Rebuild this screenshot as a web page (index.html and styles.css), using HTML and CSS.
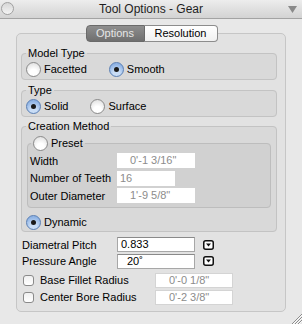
FILE: index.html
```html
<!DOCTYPE html>
<html lang="en">
<head>
  <meta charset="UTF-8" />
  <title>Tool Options - Gear</title>
  <link rel="stylesheet" href="styles.css">
</head>
<body>
  <div class="window">
    <header class="titlebar">
      <span class="close-btn"></span>
      <span class="title">Tool Options - Gear</span>
      <svg class="collapse" width="9" height="7" viewBox="0 0 9 7"><path d="M0 0 H9 L4.5 7 Z" fill="#8a8a8a"/></svg>
    </header>

    <main class="content">
      <nav class="tabs">
        <span class="tab active">Options</span>
        <span class="tab">Resolution</span>
      </nav>

      <section class="tabpanel">
        <fieldset class="group">
          <legend>Model Type</legend>
          <div class="choice-row">
            <label class="radio"><span class="radio-btn"></span>Facetted</label>
            <label class="radio"><span class="radio-btn on"></span>Smooth</label>
          </div>
        </fieldset>

        <fieldset class="group">
          <legend>Type</legend>
          <div class="choice-row">
            <label class="radio"><span class="radio-btn on"></span>Solid</label>
            <label class="radio"><span class="radio-btn"></span>Surface</label>
          </div>
        </fieldset>

        <fieldset class="group method">
          <legend>Creation Method</legend>
          <fieldset class="preset">
            <legend><label class="radio"><span class="radio-btn"></span>Preset</label></legend>
            <div class="field-row">
              <span class="field-label">Width</span>
              <span class="field disabled measure wide">0'-1 3/16&quot;</span>
            </div>
            <div class="field-row">
              <span class="field-label">Number of Teeth</span>
              <span class="field disabled short">16</span>
            </div>
            <div class="field-row">
              <span class="field-label">Outer Diameter</span>
              <span class="field disabled measure wide">1'-9 5/8&quot;</span>
            </div>
          </fieldset>
          <label class="radio dynamic"><span class="radio-btn on"></span>Dynamic</label>
        </fieldset>

        <div class="param-row first">
          <span class="param-label">Diametral Pitch</span>
          <span class="field edit">0.833</span>
          <svg class="menu-btn" width="11" height="10" viewBox="0 0 11 10"><rect x="0.75" y="0.75" width="9.5" height="8.5" rx="2" fill="#fff" stroke="#111" stroke-width="1.5"/><path d="M3 3.5 H8 L5.5 6.5 Z" fill="#111"/></svg>
        </div>
        <div class="param-row">
          <span class="param-label">Pressure Angle</span>
          <span class="field edit angle">20&#730;</span>
          <svg class="menu-btn" width="11" height="10" viewBox="0 0 11 10"><rect x="0.75" y="0.75" width="9.5" height="8.5" rx="2" fill="#fff" stroke="#111" stroke-width="1.5"/><path d="M3 3.5 H8 L5.5 6.5 Z" fill="#111"/></svg>
        </div>
        <div class="check-row">
          <label class="check"><span class="check-box"></span>Base Fillet Radius</label>
          <span class="field disabled measure framed">0'-0 1/8&quot;</span>
        </div>
        <div class="check-row">
          <label class="check"><span class="check-box"></span>Center Bore Radius</label>
          <span class="field disabled measure framed">0'-2 3/8&quot;</span>
        </div>
      </section>
    </main>

    <svg class="grip" width="12" height="12" viewBox="0 0 12 12">
      <path d="M12 2 L2 12 M12 5 L5 12 M12 8 L8 12" stroke="#8c8c8c" stroke-width="1"/>
      <path d="M12 3 L3 12 M12 6 L6 12 M12 9 L9 12" stroke="#fafafa" stroke-width="1"/>
    </svg>
  </div>
</body>
</html>
```

FILE: styles.css
```css
html, body {
  margin: 0;
  padding: 0;
}
body {
  font-family: 'Liberation Sans', Arial, sans-serif;
  font-size: 11px;
  color: #000;
  background: #e8e8e8;
}
.window {
  position: relative;
  width: 302px;
  height: 324px;
  background: #e8e8e8;
  overflow: hidden;
}
.titlebar {
  display: flex;
  align-items: center;
  justify-content: center;
  position: relative;
  height: 18px;
  background: linear-gradient(#ededed, #d3d3d3);
  border-bottom: 1px solid #a3a3a3;
}
.title {
  font-size: 12px;
  color: #1e1e1e;
}
.close-btn {
  position: absolute;
  left: 1px;
  top: 2px;
  width: 11px;
  height: 11px;
  border-radius: 50%;
  border: 1px solid #a0a0a0;
  background: linear-gradient(#d6d6d6, #f4f4f4);
}
.collapse {
  position: absolute;
  right: 5px;
  top: 6px;
}
.content {
  padding-top: 6px;
}
.tabs {
  display: flex;
  justify-content: center;
  position: relative;
  z-index: 1;
  margin-bottom: -9px;
  padding-left: 1px;
}
.tab {
  height: 15px;
  line-height: 15px;
  text-align: center;
  border: 1px solid #8c8c8c;
  background: linear-gradient(#ffffff, #f1f1f1);
}
.tab:first-child {
  width: 57px;
  border-radius: 4px 0 0 4px;
}
.tab:last-child {
  width: 72px;
  border-left: none;
  border-radius: 0 4px 4px 0;
}
.tab.active {
  background: linear-gradient(#8e8e8e, #6f6f6f);
  border-color: #6a6a6a;
  color: #e6e6e6;
}
.tabpanel {
  margin: 0 16px;
  height: 264px;
  padding: 12.5px 8px 0 4px;
  background: #e2e2e2;
  border: 1px solid #c6c6c6;
  border-radius: 5px;
}
.group {
  margin: 0 0 4px;
  padding: 3px 4px 2px;
  min-width: 0;
  border: 1px solid #c3c3c3;
  border-radius: 4px;
  background: #d9d9d9;
}
.group legend {
  padding: 0 2px;
  line-height: 13px;
  height: 13px;
}
.group + .method {
  margin-top: -1px;
}
.choice-row {
  display: flex;
  gap: 22px;
  height: 14px;
}
.radio {
  display: flex;
  align-items: center;
  gap: 3px;
  height: 15px;
  line-height: 15px;
}
.choice-row .radio {
  margin-top: -0.5px;
}
.radio-btn {
  box-sizing: border-box;
  width: 15px;
  height: 15px;
  border-radius: 50%;
  border: 1px solid #8a8a8a;
  background: radial-gradient(circle at 50% 75%, #ffffff 30%, #e4e4e4 80%);
  display: flex;
  align-items: center;
  justify-content: center;
}
.radio-btn.on {
  border-color: #5a7fb4;
  background: radial-gradient(circle at 50% 80%, #c9ddf6 25%, #8fb3e4 75%);
}
.radio-btn.on::after {
  content: "";
  width: 5px;
  height: 5px;
  border-radius: 50%;
  background: #1a1a1a;
}
.method {
  padding: 3.5px 5px 1px 5px;
}
.method > legend {
  margin-left: -1px;
}
.preset {
  margin: 0;
  padding: 2px 2px 4px;
  min-width: 0;
  border: 1px solid #bdbdbd;
  border-radius: 4px;
  background: #d1d1d1;
}
.preset legend {
  padding: 0 2px;
  margin-left: 1px;
  height: 15px;
}
.field-row {
  display: flex;
  align-items: center;
  height: 15px;
}
.field-row + .field-row {
  margin-top: 2.5px;
}
.field-label {
  width: 87px;
}
.field {
  box-sizing: border-box;
  height: 15px;
  line-height: 15px;
  background: #fff;
  white-space: pre;
}
.disabled {
  color: #8c8c8c;
}
.measure {
  padding-left: 13px;
}
.wide {
  width: 78px;
}
.short {
  width: 58px;
  padding-left: 3px;
}
.dynamic {
  margin: 6.5px 0 0 -1px;
}
.param-row {
  display: flex;
  align-items: center;
  height: 15px;
  padding-left: 1px;
  margin-top: 1.5px;
}
.param-row.first {
  margin-top: 5.5px;
}
.param-label {
  width: 95px;
}
.edit {
  width: 78px;
  padding-left: 3px;
  border: 1px solid #a7a7a7;
  border-top-color: #8a8a8a;
  line-height: 13px;
}
.angle {
  padding-left: 9px;
}
.menu-btn {
  margin-left: 8px;
}
.check-row {
  display: flex;
  align-items: center;
  height: 15px;
  margin-top: 2px;
}
.param-row + .check-row {
  margin-top: 4px;
}
.check {
  display: flex;
  align-items: center;
  gap: 6px;
  width: 132px;
  padding-left: 2px;
}
.check-box {
  box-sizing: border-box;
  width: 11px;
  height: 11px;
  border: 1px solid #8a8a8a;
  border-radius: 3px;
  background: linear-gradient(#f0f0f0, #ffffff);
}
.framed {
  width: 78px;
  border: 1px solid #d4d4d4;
  line-height: 13px;
}
.grip {
  position: absolute;
  right: 0;
  bottom: 0;
}
```
